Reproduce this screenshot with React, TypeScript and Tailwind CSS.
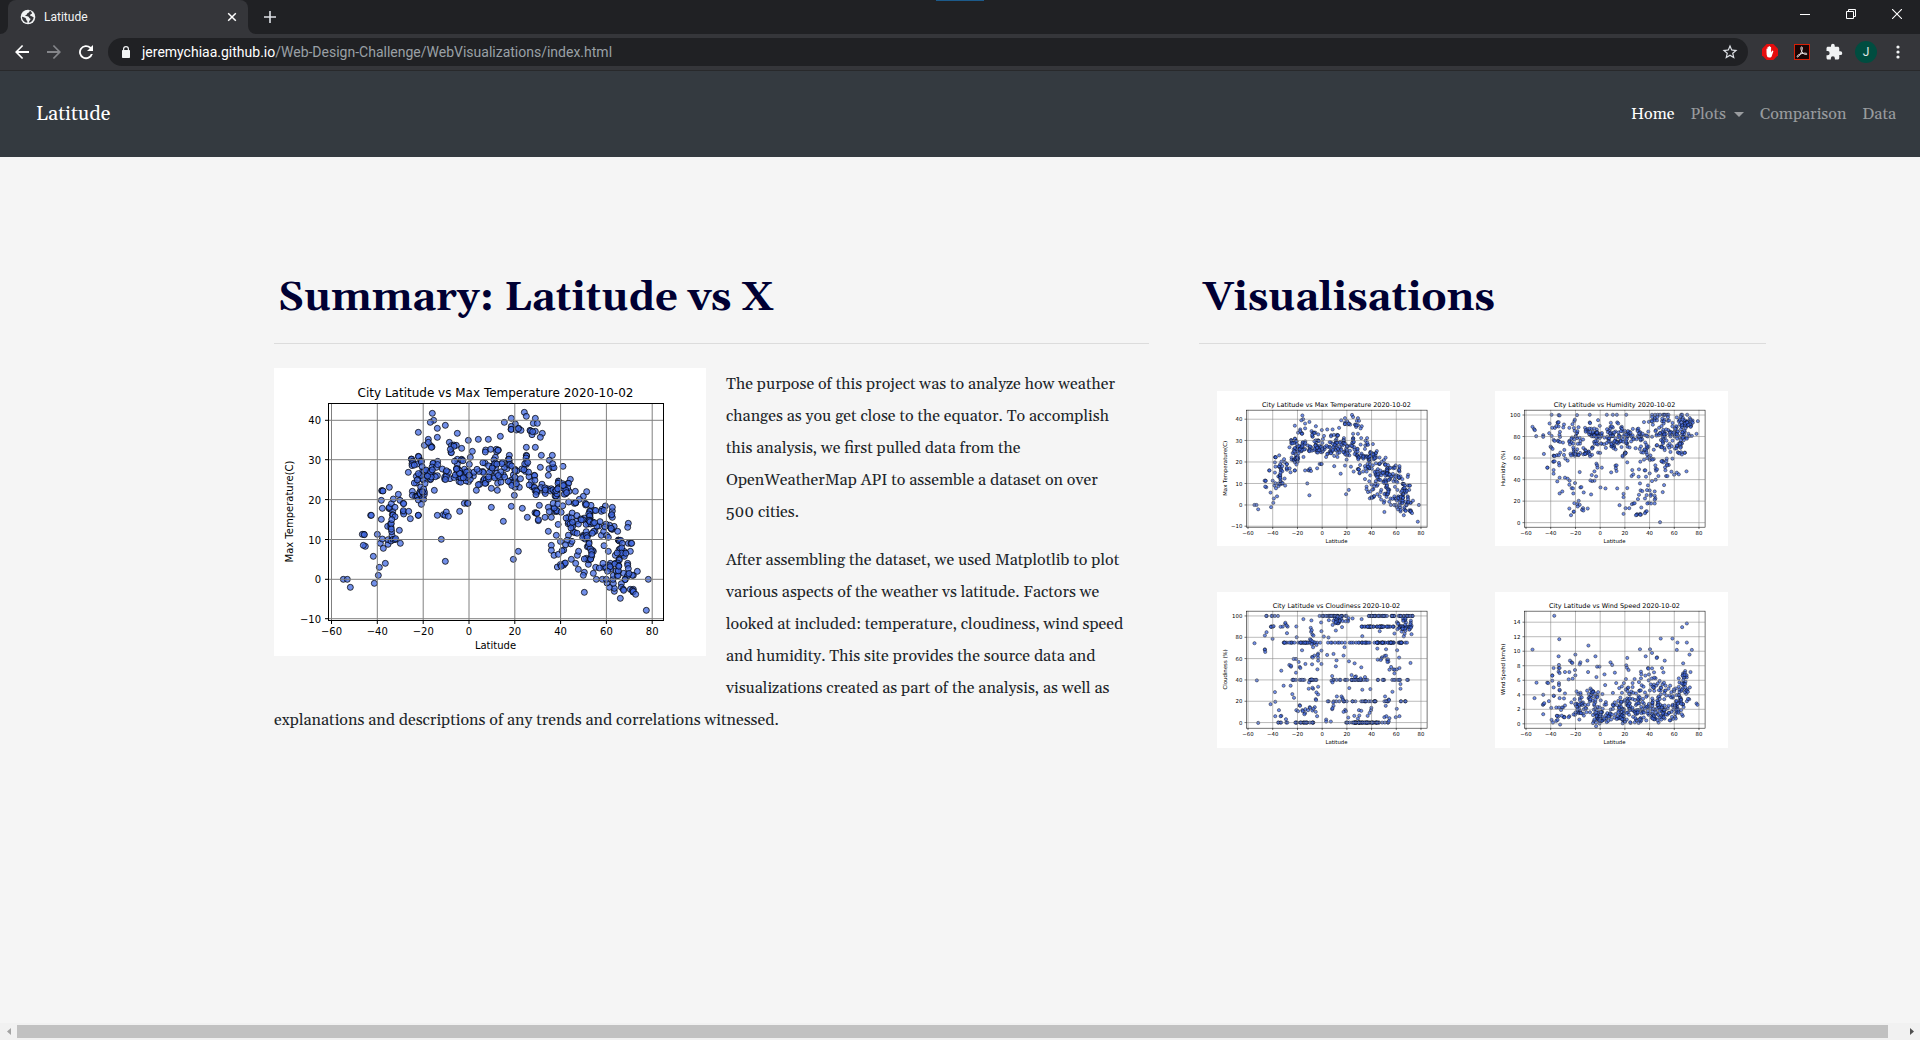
import type { ReactNode } from 'react';

type Plot = {
  title: string;
  yLabel: string;
  yTicks: [number, number][];
};

const X_TICKS: [number, number][] = [
  [-60, 57.5], [-40, 103.3], [-20, 149.2], [0, 195], [20, 240.8], [40, 286.6], [60, 332.4], [80, 378.2],
];

const TEMPERATURE: Plot = {
  title: 'City Latitude vs Max Temperature 2020-10-02',
  yLabel: 'Max Temperature(C)',
  yTicks: [[-10, 250.7], [0, 211.3], [10, 171.5], [20, 131.6], [30, 91.7], [40, 52.3]],
};

const HUMIDITY: Plot = {
  title: 'City Latitude vs Humidity 2020-10-02',
  yLabel: 'Humidity (%)',
  yTicks: [[0, 244.1], [20, 204.2], [40, 164.3], [60, 124.3], [80, 84.4], [100, 44.5]],
};

const CLOUDINESS: Plot = {
  title: 'City Latitude vs Cloudiness 2020-10-02',
  yLabel: 'Cloudiness (%)',
  yTicks: [[0, 242.1], [20, 202.6], [40, 163], [60, 123.5], [80, 84], [100, 44.4]],
};

const WIND: Plot = {
  title: 'City Latitude vs Wind Speed 2020-10-02',
  yLabel: 'Wind Speed (km/h)',
  yTicks: [[0, 244.4], [2, 217.5], [4, 190.6], [6, 163.7], [8, 136.7], [10, 109.8], [12, 82.9], [14, 56]],
};

const label = (n: number) => (n < 0 ? `−${-n}` : `${n}`);

/* A cluster of markers: [x0, x1, y0, y1, count] in figure units. */
type Band = [number, number, number, number, number];

function scatter(bands: Band[], seed: number): [number, number][] {
  let s = seed;
  const rnd = () => {
    s = (s * 16807) % 2147483647;
    return s / 2147483647;
  };
  const soft = () => ((rnd() + rnd()) / 2) * 1.5 - 0.25;
  return bands.flatMap(([x0, x1, y0, y1, n]) =>
    Array.from({ length: n }, (): [number, number] =>
      y0 === y1 ? [x0 + (x1 - x0) * rnd(), y0] : [x0 + (x1 - x0) * soft(), y0 + (y1 - y0) * soft()],
    ),
  );
}

const parse = (src: string, scale: number): [number, number][] =>
  src
    .trim()
    .split(/\s+/)
    .map((p) => {
      const [x, y] = p.split(',').map(Number);
      return [x / scale, y / scale];
    });

const temperaturePoints = [
  ...parse(
    `208,634 220,634 229,658 301,646 313,622 316,598 334,586 298,565 274,535 268,532 270,499 265,499 271,500 290,442 292,442 310,499 319,526 328,541 325,513 342,529 342,515 354,502 351,519 357,514 363,515 353,491 365,512 379,526 376,487 348,476 341,475 351,477 350,467 352,467 352,483 322,454 325,421 347,422 345,421 356,430 355,440 357,441 346,418 352,407 358,393 363,418 322,397 323,368 325,368 327,369 346,358 373,379 378,397 388,406 389,407 388,432 389,438 388,428 404,430 409,452 433,442 403,313 412,273 418,288 413,274 416,280 414,287 433,265 434,266 442,278 440,280 433,193 451,232 463,214 470,233 474,237 472,238 463,223 475,136 479,157 469,163 490,181 490,208 514,172 550,196 526,223 532,233 540,231 531,253 532,254 547,232 540,235 563,241 529,244 583,217 595,250 589,268 586,289 563,274 550,274 550,288 562,276 613,214 643,214 679,205 691,163 712,151 724,168 712,175 711,184 712,184 727,186 734,181 741,187 733,182 751,133 757,145 784,151 778,166 790,166 768,187 770,189 774,200 784,190 805,196 799,208 776,191 757,238 784,238 757,262 758,264 756,270 757,289 635,246 634,252 650,244 667,244 668,251 673,246 672,247 664,268 706,262 703,274 706,278 802,262 835,262 826,277 799,298 825,302 836,298 840,299 836,287 867,295 754,310 765,326 781,322 782,323 823,322 478,286 491,280 477,286 474,297 487,298 461,310 466,312 457,323 490,323 446,309 451,322 430,288 427,325 427,345 436,322 447,335 448,335 442,322 450,310 469,335 470,333 453,347 439,369 440,357 421,345 415,370 415,382 425,385 429,384 431,386 433,396 441,382 436,375 439,378 447,374 445,391 449,394 451,379 442,409 481,367 433,442 490,442 508,440 513,442 517,432 523,445 557,430 571,406 580,406 582,406 502,514 514,580 607,367 628,337 617,349 631,333 613,350 652,361 670,367 671,346 636,345 637,335 652,418 712,415 745,421 688,460 733,550 718,574 721,382 736,358 723,358 760,448 783,434 787,435 787,436 789,436 793,458 793,455 796,412 813,448 832,448 841,430 839,421 823,418 826,431 848,429 823,490 847,502 850,597 832,532 832,547 840,562 853,559 869,591 872,586 874,585 892,574 905,586 910,562 913,604 931,613 928,622 931,673 943,589 958,616 965,598 967,634 985,634 958,550 955,547 937,571 943,575 931,573 949,574 940,536 943,534 945,522 949,542 952,551 953,565 950,573 953,560 928,502 931,503 933,513 943,500 963,490 959,490 982,502 989,490 990,533 1003,550 998,502 1003,508 1012,481 1015,484 1013,483 1031,490 1015,429 1015,418 1012,442 1015,448 994,414 984,424 982,430 990,427 961,427 947,429 948,439 951,412 934,406 935,411 937,409 938,371 928,385 916,394 904,370 905,405 901,406 905,404 884,402 885,370 889,334 882,346 884,346 881,360 853,339 855,341 852,346 853,359 866,347 866,359 868,361 1063,466 1061,478 1033,516 1034,517 1036,519 1040,517 1045,526 1063,526 1071,526 1073,526 1069,550 1050,550 1048,556 1048,560 1035,545 1024,562 1035,574 1036,576 1051,565 1061,586 1061,592 1063,602 1078,622 1090,610 1075,622 1061,620 1049,616 1060,625 1054,634 1053,635 1042,647 1042,658 1048,664 1049,667 1021,670 1021,661 1006,658 1018,646 999,645 997,634 1017,634 1018,622 1030,622 1033,610 1032,623 994,598 989,598 996,598 987,586 976,600 1009,586 1006,592 1009,598 1024,586 1031,585 1033,592 1034,593 1069,664 1078,664 1075,667 1077,672 1078,670 1085,679 1039,691 1117,727 1123,634`,
    3,
  ).map(([x, y]): [number, number] => [x, y]),
  ...scatter(
    [
      [138, 150, 93, 100, 4], [142, 162, 100, 112, 9], [144, 152, 118, 126, 3], [156, 172, 96, 112, 5],
      [170, 198, 96, 120, 26], [174, 198, 100, 111, 14], [202, 222, 95, 113, 13], [216, 240, 92, 112, 24],
      [230, 244, 108, 118, 9], [240, 256, 94, 112, 11], [250, 268, 108, 124, 8], [262, 276, 118, 127, 12],
      [276, 290, 120, 130, 9], [285, 296, 113, 125, 6], [278, 294, 134, 146, 6], [286, 304, 144, 164, 20],
      [286, 302, 168, 184, 8], [302, 316, 146, 158, 5], [310, 326, 144, 164, 20], [308, 322, 166, 180, 4],
      [326, 342, 148, 168, 6], [286, 290, 194, 200, 2], [328, 344, 194, 208, 5], [340, 356, 174, 190, 5],
      [342, 358, 200, 208, 3], [116, 124, 142, 154, 2],
    ],
    71,
  ),
];

const humidityPoints = [
  ...parse(
    `112,107 117,114 123,135 119,117 144,132 144,137 146,188 157,229 156,229 166,166 168,169 163,97 169,71 190,72 193,73 187,94 188,95 190,93 206,100 204,109 190,106 194,122 171,110 162,126 175,146 178,149 188,148 189,150 194,152 203,154 172,173 175,193 176,194 174,211 175,211 175,236 175,247 191,215 192,222 178,210 206,191 210,202 217,208 195,184 207,176 186,270 193,259 209,259 217,262 222,280 223,268 229,290 233,291 239,275 234,306 255,288 201,300 193,306 245,72 237,90 222,110 238,119 245,125 244,126 230,139 245,141 253,140 222,149 222,152 253,242 258,287 245,338 250,328 253,340 237,335 222,351 227,371 235,361 236,360 247,345 263,350 260,355 264,357 277,351 265,303 287,309 283,71 283,94 284,96 269,110 276,114 276,119 284,195 297,240 297,268 289,251 290,269 285,267 303,217 305,222 306,229 319,229 302,255 308,87 313,104 285,132 290,131 293,129 297,126 303,127 313,128 310,130 316,128 296,152 291,168 292,169 290,172 305,149 307,160 308,184 314,185 315,288 330,291 334,71 352,71 364,71 392,71 346,95 352,109 365,94 368,97 345,107 340,118 360,121 352,134 347,243 360,223 361,231 363,239 363,222 365,291 395,290 384,307 384,317 372,341 384,367 390,350 395,213 408,254 410,236 413,249 430,234 429,256 401,350 409,338 414,336 417,335 427,323 430,310 435,297 437,348 424,368 433,367 424,370 436,369 450,361 453,359 421,371 434,370 448,365 433,276 451,256 447,237 449,237 469,269 457,282 454,296 440,299 448,321 462,297 466,309 453,311 465,313 477,313 479,321 477,336 477,325 466,336 459,334 455,336 477,300 493,392 501,302 505,281 469,71 478,71 486,71 493,71 502,71 505,71 508,71 514,71 518,71 556,71 559,71 574,71 582,81 590,88 606,90 602,128 585,105 567,122 578,128 588,134 480,232 479,222 481,238 484,234 488,254 511,254 515,254 519,221 508,228 512,209 514,219 509,237 514,222 527,241 543,244 535,250 549,249 572,240 530,202 513,202 524,182 434,211 445,205 437,183 463,206 467,202 462,246 480,265`,
    1.611,
  ),
  ...scatter(
    [
      [108, 125, 68, 84, 5], [112, 125, 114, 124, 3], [138, 156, 60, 90, 8], [134, 168, 88, 106, 10],
      [144, 186, 108, 122, 22], [148, 158, 114, 122, 5], [172, 196, 68, 90, 18], [176, 196, 76, 86, 14],
      [182, 196, 92, 104, 5], [206, 232, 68, 96, 26], [208, 236, 92, 108, 20], [230, 262, 64, 82, 20],
      [234, 252, 78, 102, 18], [234, 242, 112, 120, 7], [254, 286, 72, 96, 20], [262, 300, 98, 116, 17],
      [282, 320, 48, 62, 18], [294, 330, 68, 94, 40], [300, 326, 96, 112, 12], [332, 364, 50, 68, 28],
      [334, 358, 68, 90, 30], [344, 362, 56, 68, 12], [334, 352, 94, 108, 12], [336, 352, 112, 118, 7],
      [284, 298, 120, 128, 4], [308, 316, 122, 136, 4],
    ],
    913,
  ),
];

type Row = { y: number; runs: [number, number, number][] };

const CLOUD_ROWS: Row[] = [
  { y: 242.1, runs: [[113, 180, 26], [238, 302, 56], [306, 320, 4]] },
  { y: 202.6, runs: [[205, 262, 12], [266, 300, 13], [310, 320, 4], [340, 354, 5]] },
  { y: 163, runs: [[138, 192, 12], [172, 186, 6], [210, 300, 26], [306, 356, 11]] },
  { y: 93.9, runs: [[118, 192, 30], [200, 264, 14], [266, 300, 13], [294, 332, 28], [334, 358, 11]] },
  { y: 64.2, runs: [[100, 132, 5], [268, 330, 34], [276, 310, 12], [336, 362, 8]] },
  { y: 44.4, runs: [[88, 120, 6], [190, 240, 24], [280, 330, 30], [334, 364, 16]] },
];

const cloudinessPoints = [
  ...CLOUD_ROWS.flatMap(({ y, runs }, i) =>
    runs.flatMap(([a, b, n], j) => scatter([[a, b, y, y, n]], 1700 + i * 3100 + j * 700)),
  ),
  ...parse(
    `112,153 119,264 123,391 143,130 148,120 143,171 143,173 144,179 161,104 169,102 166,140 160,335 185,353 192,370 174,371 190,371 206,380 173,299 174,328 192,235 199,280 216,218 221,223 221,220 220,280 225,305 230,316 236,200 229,200 244,209 236,241 247,224 249,227 264,215 284,216 238,135 209,123 204,95 204,92 208,100 190,104 237,103 247,338 237,353 242,356 248,340 264,350 255,353 256,356 272,353 285,354 277,344 263,362 261,365 258,81 254,174 282,85 281,119 280,107 283,114 285,127 288,130 278,141 281,144 288,153 287,165 291,190 284,194 286,196 302,184 301,188 302,196 302,205 300,231 312,215 275,270 283,261 287,289 274,289 285,286 302,283 302,306 297,300 295,320 296,323 278,346 292,344 295,358 299,371 288,349 311,91 312,117 312,175 319,133 333,136 355,115 329,188 348,185 378,190 381,165 357,204 355,222 394,207 411,213 431,225 402,248 415,252 412,254 429,258 442,254 344,251 342,265 345,270 395,287 434,292 458,290 358,312 372,312 375,317 347,330 348,340 344,350 345,347 383,352 385,356 378,358 376,322 392,375 410,370 421,378 424,353 425,369 431,355 450,370 460,353 456,361 461,346 326,381 326,387 340,387 502,312 513,321 514,323 505,326 504,340 537,349 500,374 506,371 515,377 534,374 545,371 513,386 524,298 548,289 548,275 479,169 486,117 434,132 432,81 405,79 391,84 393,78 505,171 501,191 493,195 505,190 491,199 480,202 508,202 511,201 489,203 512,208 509,209 515,232 520,224 527,231 531,232 537,231 530,243 545,227 544,196 538,174 578,212 581,126 530,124 563,116`,
    1.611,
  ),
  ...scatter([[210, 238, 46, 62, 22], [214, 226, 50, 60, 6], [334, 364, 50, 70, 28], [340, 352, 66, 80, 7], [174, 184, 86, 98, 4]], 3310),
];

const windPoints = [
  ...parse(
    `177,71 192,141 112,172 118,317 124,271 144,307 143,337 145,335 144,365 147,332 161,326 156,271 159,272 171,249 171,250 171,265 175,227 190,192 191,218 190,227 193,227 190,238 193,242 175,285 191,272 191,278 193,294 209,239 222,239 240,187 224,205 229,210 231,212 239,233 240,249 232,259 220,261 255,210 253,216 276,205 279,160 300,192 278,239 305,223 312,223 303,254 327,246 345,210 350,218 358,241 379,282 395,197 392,219 394,226 399,233 433,171 463,171 450,192 469,182 484,195 483,197 495,139 530,139 507,205 573,94 559,105 588,173 581,187 562,213 545,151 573,151 543,173 602,333 605,337 499,227 503,240 457,227 458,229 436,238 437,246 475,240 469,228 436,258 417,260 430,269 411,272 391,260 411,284 371,287 385,272 362,272 329,278 405,391 429,391 387,387 404,389 568,236 584,239 562,243 549,258 551,270 549,283 569,268 582,285 571,304 169,382 173,390 183,385 187,382 185,370 190,371 252,381 222,371 220,374 239,367 207,373 209,339 203,345 200,345 191,345 206,318 193,317 176,310 175,310 209,303 193,292 183,345 168,346 185,370`,
    1.611,
  ),
  ...scatter(
    [
      [148, 160, 198, 224, 12], [142, 176, 188, 226, 28], [164, 206, 180, 212, 22], [172, 184, 180, 190, 10],
      [182, 200, 218, 244, 32], [118, 132, 222, 242, 5], [190, 224, 205, 242, 20], [216, 244, 186, 240, 38],
      [230, 270, 200, 242, 40], [236, 262, 176, 210, 20], [264, 296, 166, 210, 24], [268, 314, 206, 240, 46],
      [286, 330, 178, 212, 24], [296, 332, 210, 236, 30], [298, 328, 164, 188, 14], [328, 346, 186, 230, 30],
      [342, 360, 164, 196, 18], [340, 362, 198, 224, 8], [272, 298, 152, 164, 5], [345, 362, 150, 164, 9],
      [200, 330, 232, 241, 18],
    ],
    577,
  ),
];

function ScatterPlot({ plot, points, className }: { plot: Plot; points: [number, number][]; className?: string }) {
  return (
    <svg
      viewBox="0 0 432 288"
      role="img"
      aria-label={plot.title}
      className={`block bg-white ${className ?? ''}`}
      fontFamily='"DejaVu Sans", sans-serif'
      fontSize="10"
    >
      <g fill="#4169e1" stroke="#000" strokeWidth="1" fillOpacity="0.75" strokeOpacity="0.75">
        {points.map(([x, y], i) => (
          <circle key={i} cx={x} cy={y} r="3" />
        ))}
      </g>
      <g stroke="#808080" strokeWidth="1">
        {X_TICKS.map(([v, x]) => (
          <line key={v} x1={x} x2={x} y1="35" y2="252" />
        ))}
        {plot.yTicks.map(([v, y]) => (
          <line key={v} x1="54" x2="389" y1={y} y2={y} />
        ))}
      </g>
      <rect x="54.5" y="35.5" width="335" height="217" fill="none" stroke="#000" strokeWidth="1" />
      <g stroke="#000" strokeWidth="1">
        {X_TICKS.map(([v, x]) => (
          <line key={v} x1={x} x2={x} y1="252" y2="256" />
        ))}
        {plot.yTicks.map(([v, y]) => (
          <line key={v} x1="51" x2="54" y1={y} y2={y} />
        ))}
      </g>
      <g textAnchor="middle">
        {X_TICKS.map(([v, x]) => (
          <text key={v} x={x} y="267">
            {label(v)}
          </text>
        ))}
      </g>
      <g textAnchor="end">
        {plot.yTicks.map(([v, y]) => (
          <text key={v} x="47" y={y + 4}>
            {label(v)}
          </text>
        ))}
      </g>
      <text x="221.5" y="281" textAnchor="middle">
        Latitude
      </text>
      <text transform="translate(19 143.5) rotate(-90)" textAnchor="middle">
        {plot.yLabel}
      </text>
      <text x="221.5" y="29" fontSize="12" textAnchor="middle">
        {plot.title}
      </text>
    </svg>
  );
}

function IconButton({ name, className, children }: { name: string; className?: string; children: ReactNode }) {
  return (
    <button type="button" aria-label={name} className={`flex shrink-0 items-center justify-center ${className ?? ''}`}>
      {children}
    </button>
  );
}

function TabStrip() {
  return (
    <div className="relative flex h-[34px] items-stretch bg-[#202124] pl-2">
      <div className="absolute top-0 left-[936px] h-px w-12 bg-[#1c5a8a]" />
      <div className="relative flex w-60 items-center rounded-t-lg bg-[#35363a] pr-2 pl-3">
        <svg viewBox="0 0 8 8" className="absolute bottom-0 -left-2 h-2 w-2">
          <path d="M8 0v8H0a8 8 0 0 0 8-8z" fill="#35363a" />
        </svg>
        <svg viewBox="0 0 8 8" className="absolute -right-2 bottom-0 h-2 w-2">
          <path d="M0 0v8h8a8 8 0 0 1-8-8z" fill="#35363a" />
        </svg>
        <svg viewBox="0 0 16 16" className="h-4 w-4">
          <circle cx="8" cy="8" r="7.3" fill="#f1f3f4" />
          <path
            d="M9.6 1.6c.2 1.4-.5 2.1-1.6 2.3-.9.2-1 .9-1.1 1.6-.6.6-1.5.4-1.7 1.3.9.6 3.3-.1 3.7 1.5.2 1 1.2.9 1.5 1.5.3.9-.5 1.6-1.1 2.1l-.5 1.9c2.500-.5 4.700-2.600 4.900-5.600-1.300-.2-1.600-1.100-2.600-1.200-.8-.1-1.100-.6-.8-1.300.4-.8 1.200-.6 1.700-1.300C11.600 3 10.600 2 9.600 1.600zM2 7.800c1.600.4 3.200.8 3.900 1.700.6.8 0 1.600.9 2.100.6.4.6 1.200.5 2.200C4.200 13.500 2 11 2 7.800z"
            fill="#35363a"
          />
        </svg>
        <span className="ml-2 flex-1 text-xs text-[#f1f3f4]">Latitude</span>
        <IconButton name="Close tab" className="h-4 w-4">
          <svg viewBox="0 0 10 10" className="h-2.5 w-2.5" stroke="#fff" strokeWidth="1.5" fill="none">
            <path d="M1.2 1.2l7.6 7.6M8.8 1.2l-7.6 7.6" />
          </svg>
        </IconButton>
      </div>
      <IconButton name="New tab" className="ml-2 w-7">
        <svg viewBox="0 0 12 12" className="h-3 w-3" stroke="#dee1e6" strokeWidth="1.6">
          <path d="M6 0v12M0 6h12" />
        </svg>
      </IconButton>
      <div className="flex-1" />
      <div className="flex h-7">
        <IconButton name="Minimize" className="w-[46px]">
          <svg viewBox="0 0 10 10" className="h-2.5 w-2.5">
            <path d="M0 5h10v1H0z" fill="#fff" />
          </svg>
        </IconButton>
        <IconButton name="Restore" className="w-[46px]">
          <svg viewBox="0 0 10 10" className="h-2.5 w-2.5" stroke="#fff" fill="none">
            <path d="M.5 2.5h7v7h-7zM2.5 2.5v-2h7v7h-2" />
          </svg>
        </IconButton>
        <IconButton name="Close" className="w-[46px]">
          <svg viewBox="0 0 10 10" className="h-2.5 w-2.5" stroke="#fff" strokeWidth="1.1">
            <path d="M0 0l10 10M10 0L0 10" />
          </svg>
        </IconButton>
      </div>
    </div>
  );
}

function Toolbar() {
  return (
    <div className="flex h-[37px] items-center border-b border-[#28292b] bg-[#35363a] pr-3 pl-2">
      <IconButton name="Back" className="h-7 w-7">
        <svg viewBox="0 0 16 16" className="h-4 w-4" fill="#fff">
          <path d="M15 7H4.3l4.900-4.900L8 1 1 8l7 7 1.200-1.100L4.300 9H15z" />
        </svg>
      </IconButton>
      <IconButton name="Forward" className="ml-1 h-7 w-7">
        <svg viewBox="0 0 16 16" className="h-4 w-4" fill="#85868a">
          <path d="M1 7h10.700L6.800 2.100 8 1l7 7-7 7-1.200-1.100L11.700 9H1z" />
        </svg>
      </IconButton>
      <IconButton name="Reload" className="ml-1 h-7 w-7">
        <svg viewBox="0 0 16 16" className="h-4 w-4" fill="#fff">
          <path d="M12.900 3.100A7 7 0 1 0 14.800 10h-1.900a5.200 5.200 0 1 1-1.200-5.600L9 7.100h6V1z" />
        </svg>
      </IconButton>
      <div className="ml-2 flex h-7 flex-1 items-center rounded-full bg-[#202124] pr-2.5 pl-3.5">
        <svg viewBox="0 0 8 12" className="h-3 w-2" fill="#f1f3f4">
          <path d="M1 4V3a3 3 0 0 1 6 0v1h.3q.7 0 .7.700v6.600q0 .7-.7.700H.7Q0 12 0 11.300V4.700Q0 4 .7 4zm1.200 0h3.600V3a1.800 1.800 0 0 0-3.600 0z" />
        </svg>
        <div className="ml-3 flex-1 text-sm text-[#9aa0a6]">
          <span className="text-white">jeremychiaa.github.io</span>
          /Web-Design-Challenge/WebVisualizations/index.html
        </div>
        <IconButton name="Bookmark this tab" className="h-4 w-4">
          <svg viewBox="0 0 24 24" className="h-[18px] w-[18px] shrink-0" fill="#dee1e6">
            <path d="M22 9.240l-7.190-.62L12 2 9.190 8.630 2 9.240l5.460 4.730L5.820 21 12 17.270 18.180 21l-1.630-7.030L22 9.240zM12 15.400l-3.760 2.270 1-4.280-3.320-2.880 4.380-.38L12 6.100l1.710 4.040 4.380.38-3.320 2.880 1 4.280L12 15.400z" />
          </svg>
        </IconButton>
      </div>
      <div className="ml-3.5 flex items-center gap-4">
        <IconButton name="Ad blocker" className="h-4 w-4">
          <svg viewBox="0 0 16 16" className="h-4 w-4">
            <path d="M4.700 0h6.600L16 4.700v6.600L11.300 16H4.700L0 11.300V4.700z" fill="#e40d0d" />
            <path
              d="M4.500 8.400V5q0-.6.5-.6t.5.600V3.400q0-.6.6-.6t.6.600v-.8q0-.6.600-.6t.6.600v.7q0-.5.600-.5t.600.600v5l.9-1.400q.4-.6 1-.3t.3.900L9.600 12.500q-.4 1-1.400 1H7Q5 13.500 4.700 11z"
              fill="#fff"
            />
          </svg>
        </IconButton>
        <IconButton name="PDF tools" className="h-4 w-4">
          <svg viewBox="0 0 16 16" className="h-4 w-4">
            <rect x=".5" y=".5" width="15" height="15" fill="#1a0505" stroke="#d81f06" />
            <path
              d="M7.500 2.800c1.200-.3.900 2.400.2 4.400C6.800 9.800 4.700 13 3.500 13c-1.500-.4.400-2.300 3.500-3.200 2.600-.8 5.900-1 6 .1.100 1.300-2.800.6-4.200-.9C7 7.200 6.300 3.300 7.500 2.800z"
              fill="none"
              stroke="#e8e0e0"
            />
          </svg>
        </IconButton>
        <IconButton name="Extensions" className="h-4 w-4">
          <svg viewBox="0 0 24 24" className="h-[18px] w-[18px] shrink-0" fill="#f1f3f4">
            <path d="M20.500 11H19V7c0-1.100-.9-2-2-2h-4V3.500a2.500 2.500 0 0 0-5 0V5H4c-1.100 0-2 .9-2 2v3.800h1.500a2.700 2.700 0 0 1 0 5.400H2V20c0 1.100.9 2 2 2h3.800v-1.500a2.700 2.700 0 0 1 5.400 0V22H17c1.100 0 2-.9 2-2v-4h1.500a2.500 2.500 0 0 0 0-5z" />
          </svg>
        </IconButton>
      </div>
      <button
        type="button"
        aria-label="Profile"
        className="ml-[13px] flex h-[22px] w-[22px] items-center justify-center rounded-full bg-[#004d40] text-xs text-[#e0e8e6]"
      >
        J
      </button>
      <IconButton name="Menu" className="ml-[11px] h-5 w-5">
        <svg viewBox="0 0 4 14" className="h-3.5 w-1" fill="#f1f3f4">
          <circle cx="2" cy="2" r="1.6" />
          <circle cx="2" cy="7" r="1.6" />
          <circle cx="2" cy="12" r="1.6" />
        </svg>
      </IconButton>
    </div>
  );
}

function SiteNav() {
  return (
    <nav className="flex h-[86px] items-center justify-between bg-[#343a40] pr-4 pl-9">
      <a href="#home" className="text-xl text-white">
        Latitude
      </a>
      <ul className="flex text-base text-white/50">
        <li>
          <a href="#home" className="px-2 text-white">
            Home
          </a>
        </li>
        <li>
          <a href="#plots" className="flex items-center px-2">
            Plots
            <span className="ml-2 border-x-[5px] border-t-[5px] border-x-transparent border-t-white/50" />
          </a>
        </li>
        <li>
          <a href="#comparison" className="px-2">
            Comparison
          </a>
        </li>
        <li>
          <a href="#data" className="px-2">
            Data
          </a>
        </li>
      </ul>
    </nav>
  );
}

const GALLERY: { plot: Plot; points: [number, number][] }[] = [
  { plot: TEMPERATURE, points: temperaturePoints },
  { plot: HUMIDITY, points: humidityPoints },
  { plot: CLOUDINESS, points: cloudinessPoints },
  { plot: WIND, points: windPoints },
];

function SectionTitle({ children }: { children: ReactNode }) {
  return (
    <h1 className="mb-6 border-b border-black/10 px-1 pb-5 text-[40px] leading-[48px] font-bold text-[#000033]">
      {children}
    </h1>
  );
}

export default function App() {
  return (
    <div className="flex min-h-screen flex-col bg-[#f5f5f5] font-['Georgia','Gelasio','Liberation_Serif',serif] text-[#212529]">
      <header className="font-['Segoe_UI','Roboto','Open_Sans',sans-serif]">
        <TabStrip />
        <Toolbar />
      </header>
      <SiteNav />
      <main className="grid flex-1 grid-cols-[875fr_567fr] content-start gap-[50px] pt-[118px] pr-[154px] pl-[274px]">
        <section>
          <SectionTitle>Summary: Latitude vs X</SectionTitle>
          <ScatterPlot plot={TEMPERATURE} points={temperaturePoints} className="float-left mr-5 mb-5 w-[432px]" />
          <div className="pr-6 leading-8">
            <p className="mb-4">
              The purpose of this project was to analyze how weather changes as you get close to the equator. To
              accomplish this analysis, we first pulled data from the OpenWeatherMap API to assemble a dataset on over
              500 cities.
            </p>
            <p>
              After assembling the dataset, we used Matplotlib to plot various aspects of the weather vs latitude.
              Factors we looked at included: temperature, cloudiness, wind speed and humidity. This site provides the
              source data and visualizations created as part of the analysis, as well as explanations and descriptions
              of any trends and correlations witnessed.
            </p>
          </div>
        </section>
        <section>
          <SectionTitle>Visualisations</SectionTitle>
          <div className="mt-[47px] mr-[38px] ml-[18px] grid grid-cols-2 gap-x-[45px] gap-y-[46px]">
            {GALLERY.map(({ plot, points }) => (
              <a key={plot.title} href="#plots">
                <ScatterPlot plot={plot} points={points} className="w-full" />
              </a>
            ))}
          </div>
        </section>
      </main>
      <div className="flex h-[17px] items-center bg-[#f1f1f1]">
        <IconButton name="Scroll left" className="w-[17px]">
          <svg viewBox="0 0 4 7" className="h-[7px] w-1" fill="#a3a3a3">
            <path d="M4 0v7L0 3.500z" />
          </svg>
        </IconButton>
        <div className="h-[13px] flex-1 bg-[#c1c1c1]" />
        <IconButton name="Scroll right" className="ml-[15px] w-[17px]">
          <svg viewBox="0 0 4 7" className="h-[7px] w-1" fill="#505050">
            <path d="M0 0v7l4-3.500z" />
          </svg>
        </IconButton>
      </div>
    </div>
  );
}
